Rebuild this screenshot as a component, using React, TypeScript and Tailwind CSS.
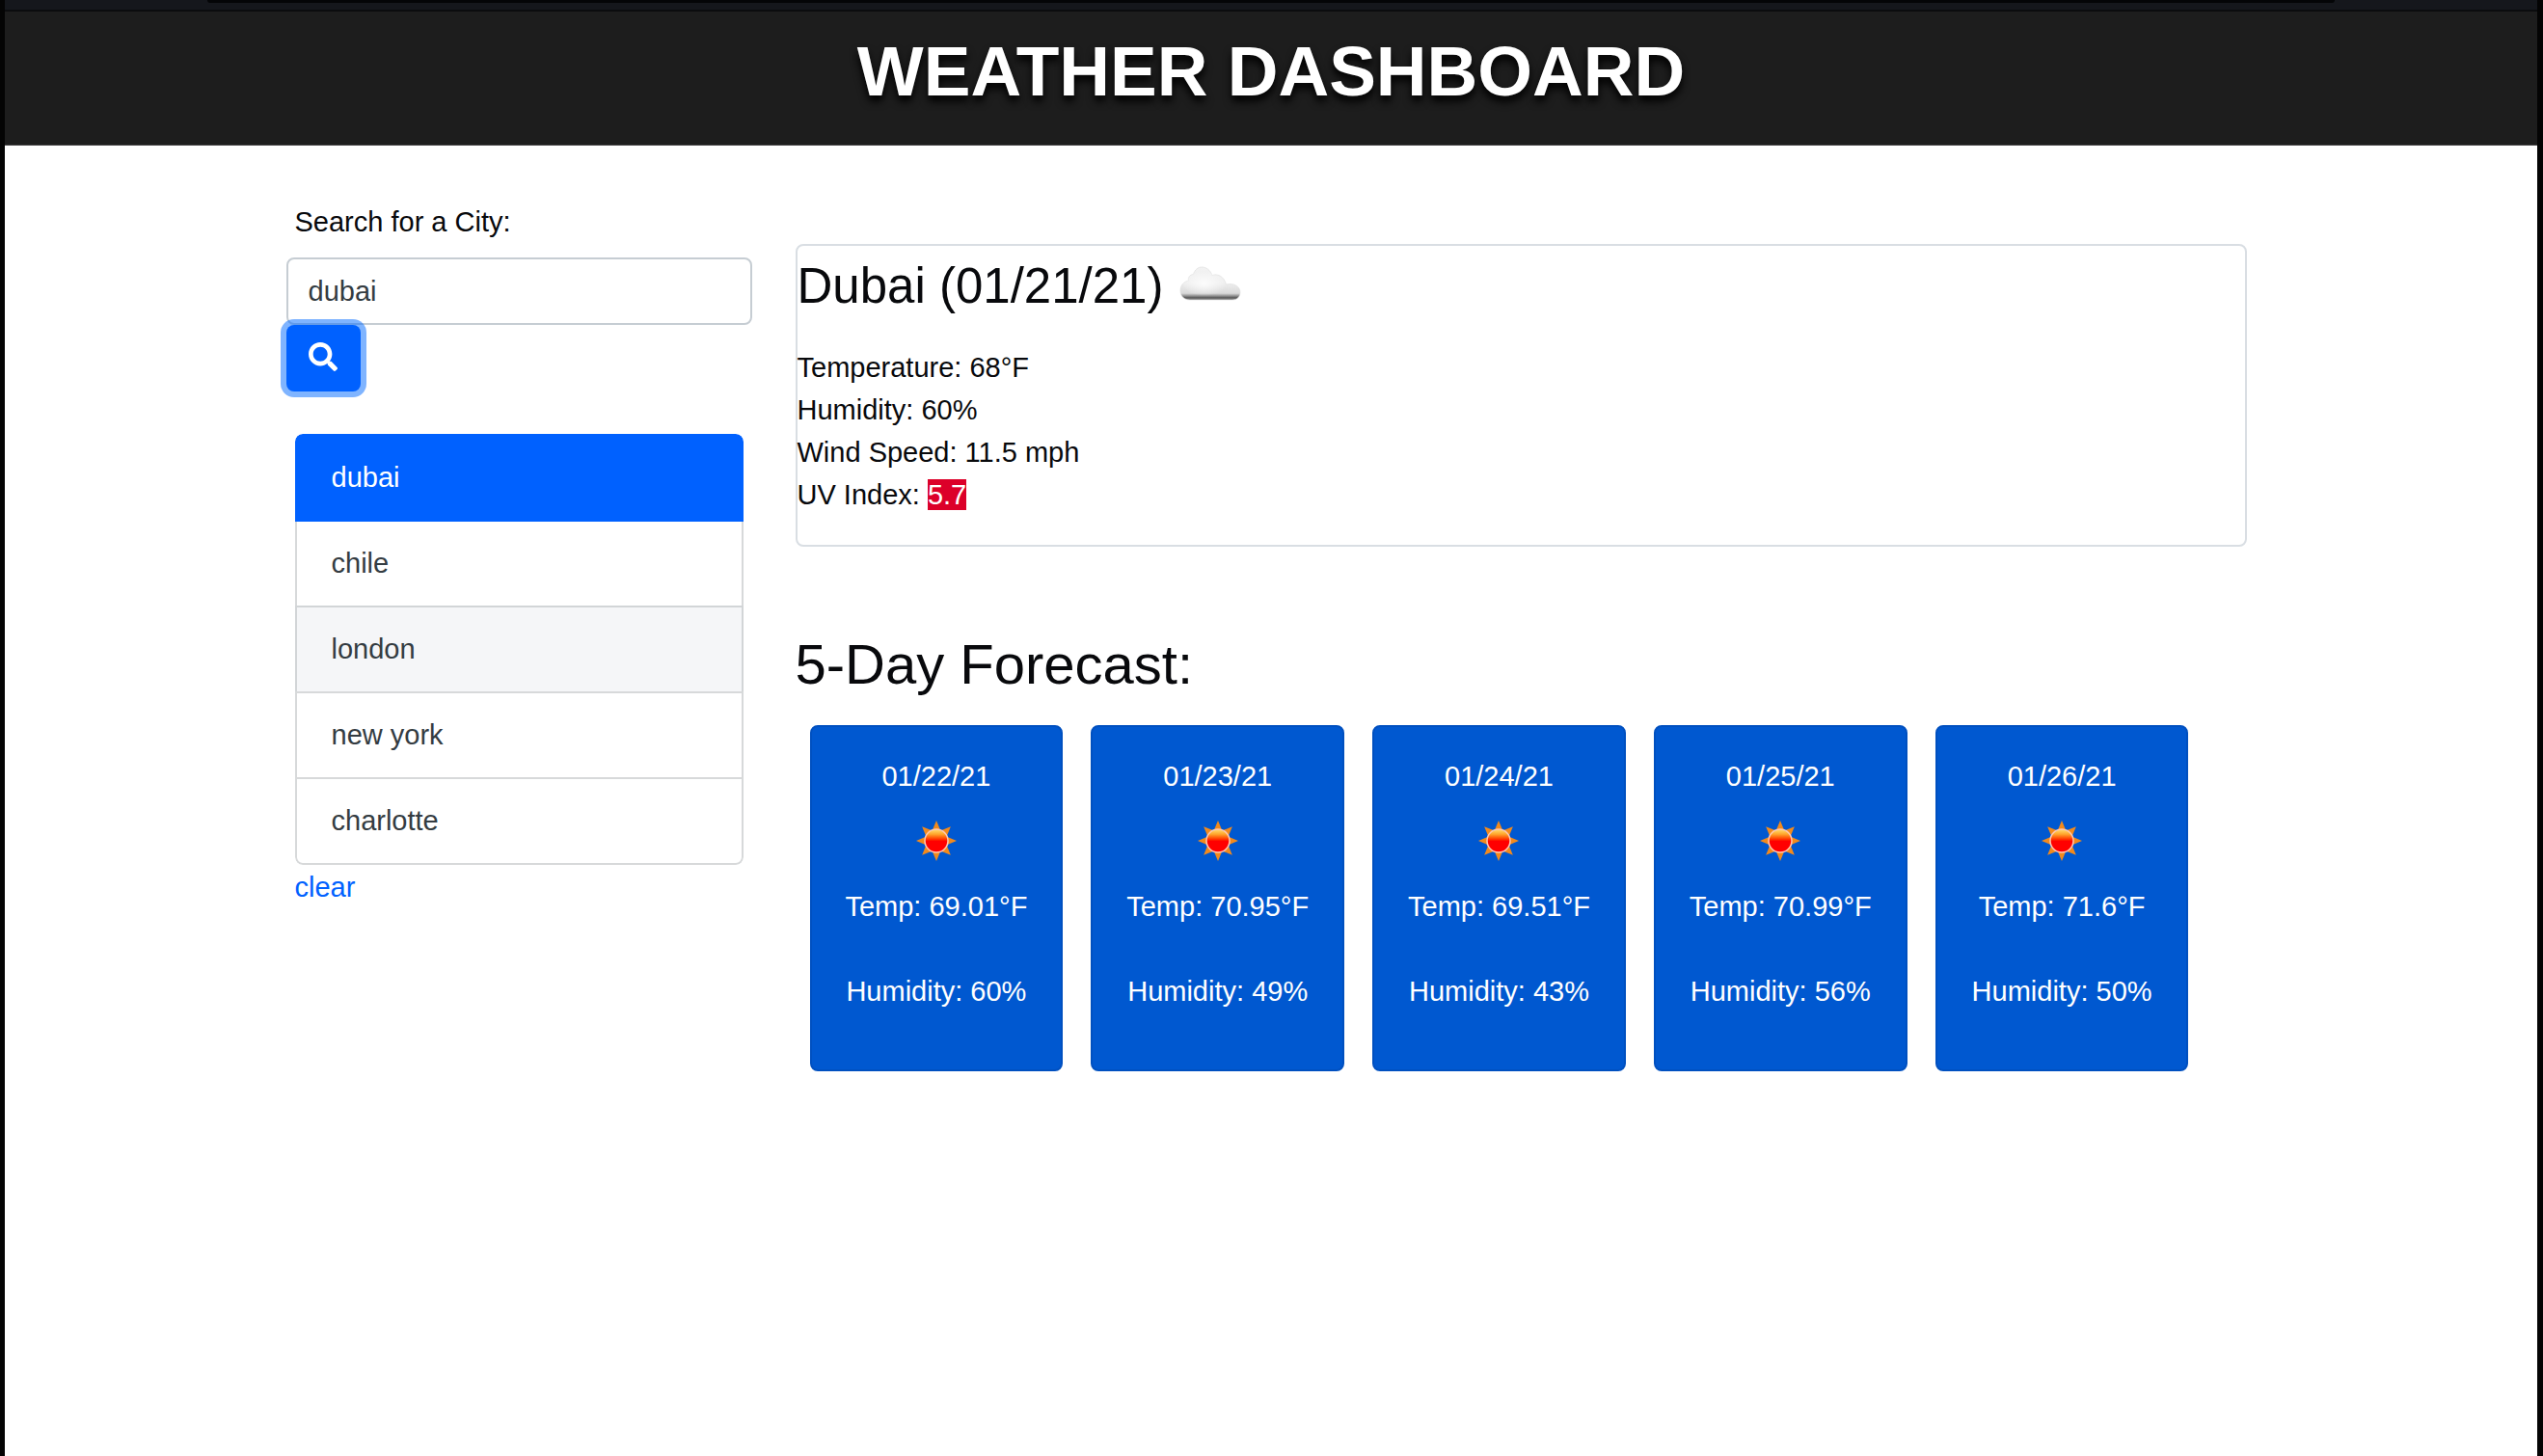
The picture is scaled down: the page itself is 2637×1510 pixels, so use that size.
import { useState } from "react";
import { FaSearch } from "react-icons/fa";

const CITIES = ["dubai", "chile", "london", "new york", "charlotte"];

const FORECAST = [
  { date: "01/22/21", temp: "69.01", humidity: 60 },
  { date: "01/23/21", temp: "70.95", humidity: 49 },
  { date: "01/24/21", temp: "69.51", humidity: 43 },
  { date: "01/25/21", temp: "70.99", humidity: 56 },
  { date: "01/26/21", temp: "71.6", humidity: 50 },
];

function CloudIcon() {
  return (
    <svg viewBox="0 0 64 38" className="h-[38px] w-16" role="img" aria-label="Cloudy">
      <defs>
        <linearGradient id="cloud-fill" x1="0" y1="0" x2="0" y2="1">
          <stop offset="0" stopColor="#f2f2f2" />
          <stop offset="0.5" stopColor="#eeeeee" />
          <stop offset="0.8" stopColor="#d9d9d9" />
          <stop offset="0.86" stopColor="#a2a2a2" />
          <stop offset="0.93" stopColor="#5e5e5e" />
          <stop offset="1" stopColor="#8a8a8a" />
        </linearGradient>
        <radialGradient id="cloud-light" cx="0.45" cy="0.5" r="0.5">
          <stop offset="0" stopColor="#ffffff" stopOpacity="0.85" />
          <stop offset="1" stopColor="#ffffff" stopOpacity="0" />
        </radialGradient>
      </defs>
      <path
        d="M11 36C5 36 1 32 1 26.500C1 21 4.500 17 9.500 16C8.500 13 11 9.500 14.500 9.500C16 4.500 19.500 2 23 2C28 2 32 5 34 10.500C39 8.500 46 11 48.500 20C56 18 63 22 63 28C63 32.500 60 36 55 36Z"
        fill="url(#cloud-fill)"
        stroke="#dcdcdc"
        strokeOpacity="0.6"
        strokeWidth="1"
      />
      <ellipse cx="28" cy="19" rx="24" ry="13" fill="url(#cloud-light)" />
    </svg>
  );
}

function SunIcon() {
  return (
    <svg viewBox="0 0 42 42" className="size-[42px]" role="img" aria-label="Sunny">
      <defs>
        <linearGradient id="sun-fill" x1="0" y1="0" x2="0" y2="1">
          <stop offset="0" stopColor="#ffe070" />
          <stop offset="0.22" stopColor="#ffa32a" />
          <stop offset="0.42" stopColor="#ff3c00" />
          <stop offset="0.52" stopColor="#ff0000" />
          <stop offset="1" stopColor="#ff0000" />
        </linearGradient>
      </defs>
      {[0, 45, 90, 135, 180, 225, 270, 315].map((angle) => (
        <path key={angle} d="M21 0L26 12H16Z" fill="#f28a1c" transform={`rotate(${angle} 21 21)`} />
      ))}
      <circle cx="21" cy="21" r="12" fill="url(#sun-fill)" stroke="#ffc8b4" strokeWidth="1.500" />
    </svg>
  );
}

export default function App() {
  const [query, setQuery] = useState("dubai");

  return (
    <div className="flex min-h-screen flex-col border-r-[6px] border-l-[5px] border-[#040404] bg-white font-['Liberation_Sans',Arial,sans-serif] text-[29px] leading-[44px] text-[#08090c]">
      <div className="h-3 border-b-2 border-[#0b0c0e] bg-[#15171c] px-[210px]">
        <div className="h-[3px] rounded-b-[10px] bg-[#040507]" />
      </div>

      <header className="border-b border-[#454345] bg-[#1d1d1d] pt-[18px] pb-8 text-center">
        <h1 className="text-[73px] leading-[88px] font-bold text-white [text-shadow:0_6px_8px_#000]">
          WEATHER DASHBOARD
        </h1>
      </header>

      <main className="mx-auto flex w-full max-w-[2073px] items-start gap-[45px] pt-[57px] pr-[25px] pl-[15px]">
        <aside className="w-[483px] shrink-0">
          <form onSubmit={(event) => event.preventDefault()}>
            <label htmlFor="city" className="mb-[15px] block pl-[9px]">
              Search for a City:
            </label>
            <input
              id="city"
              type="text"
              value={query}
              onChange={(event) => setQuery(event.target.value)}
              className="block h-[70px] w-full rounded-lg border-2 border-[#c6cdd3] bg-white px-[21px] text-[#343c42] outline-none"
            />
            <button
              type="submit"
              aria-label="Search"
              className="relative flex h-[69px] w-[77px] justify-center rounded-lg bg-[#0061ff] pt-[18px] text-white ring-[6px] ring-[#0069ff]/50"
            >
              <FaSearch className="size-[30px]" />
            </button>
          </form>

          <div className="mt-11 px-[9px]">
            <ul className="mb-px overflow-hidden rounded-lg">
              {CITIES.map((city, index) => (
                <li key={city} className={index === 0 ? "" : "-mt-[2px]"}>
                  <button
                    type="button"
                    className={
                      "relative block w-full border-2 px-9 pt-[21px] pb-[22px] text-left " +
                      (index === 0
                        ? "z-10 rounded-t-lg border-[#0061ff] bg-[#0061ff] text-white"
                        : city === "london"
                          ? "border-[#d2d5d7] bg-[#f5f6f8] text-[#343c42]"
                          : index === CITIES.length - 1
                            ? "rounded-b-lg border-[#d7d9da] bg-white text-[#343c42]"
                            : "border-[#d7d9da] bg-white text-[#343c42]")
                    }
                  >
                    {city}
                  </button>
                </li>
              ))}
            </ul>
            <a href="#clear" className="block w-fit text-[#0061ff]">
              clear
            </a>
          </div>
        </aside>

        <div className="min-w-0 flex-1 pt-[45px]">
          <section className="rounded-lg border-2 border-[#d9dee3] pt-[11px] pb-[30px]">
            <h2 className="mb-8 flex items-start gap-[17px] text-[51px] leading-[61px]">
              Dubai (01/21/21)
              <span className="pt-[9px]">
                <CloudIcon />
              </span>
            </h2>
            <p>Temperature: 68°F</p>
            <p>Humidity: 60%</p>
            <p>Wind Speed: 11.5 mph</p>
            <p>
              UV Index: <span className="bg-[#dc0029] text-white">5.7</span>
            </p>
          </section>

          <h2 className="mt-[87px] text-[58px] leading-[70px]">5-Day Forecast:</h2>
          <div className="mt-7 mr-[60px] ml-[15px] grid grid-cols-5 gap-[29px]">
            {FORECAST.map((day) => (
              <article
                key={day.date}
                className="flex flex-col items-center rounded-lg border-2 border-[#0050c0] bg-[#0058d0] pt-[29px] pb-[59px] whitespace-nowrap text-white"
              >
                <p className="mb-6">{day.date}</p>
                <SunIcon />
                <p className="mt-[25px]">Temp: {day.temp}°F</p>
                <p className="mt-11">Humidity: {day.humidity}%</p>
              </article>
            ))}
          </div>
        </div>
      </main>
    </div>
  );
}
